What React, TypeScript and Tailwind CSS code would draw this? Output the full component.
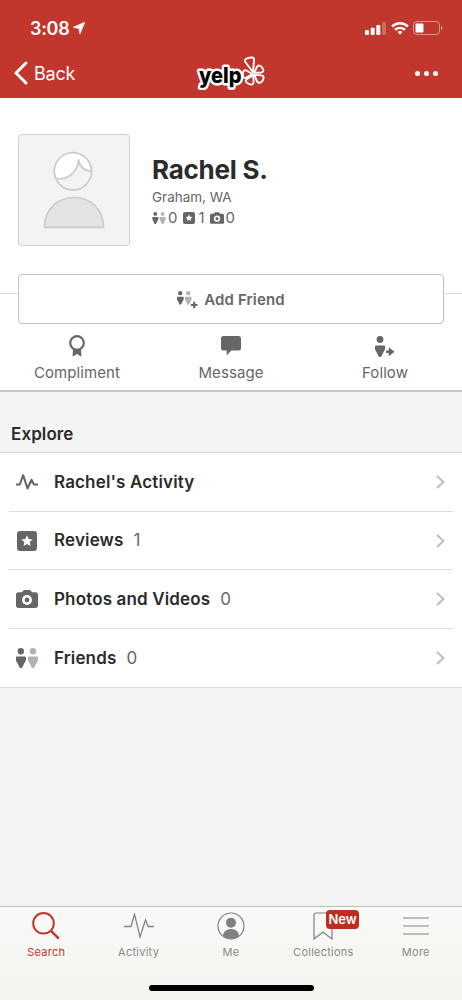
import React from "react";

type IconProps = { className?: string };

const personPath = "M1.200 8.500h7.400c1.200 0 1.800.9 1.600 2l-.4 2.200c-.2 1-.7 1.600-1.300 2.400L6.600 19c-.7 1.400-2.500 1.400-3.200 0l-1.900-3.900c-.6-.8-1.100-1.400-1.300-2.400l-.4-2.200c-.2-1.100.3-2 1.400-2Z";

const FriendsIcon = ({ className }: IconProps) => (
	<svg viewBox="0 0 22 20" className={className}>
		<circle cx="4.800" cy="3.200" r="3.200" fill="#666" />
		<path d={personPath} transform="translate(-.1 0)" fill="#666" />
		<circle cx="17" cy="3.200" r="3.200" fill="#b2b2b2" />
		<path d={personPath} transform="translate(12 0)" fill="#b2b2b2" />
	</svg>
);

const ReviewIcon = ({ className }: IconProps) => (
	<svg viewBox="0 0 20 20" className={className}>
		<rect width="20" height="20" rx="3.200" fill="#666" />
		<path
			d="m10 4.200 1.700 3.700 4 .5-3 2.700.8 4-3.500-2-3.500 2 .8-4-3-2.700 4-.5Z"
			fill="#fff"
		/>
	</svg>
);

const CameraIcon = ({ className }: IconProps) => (
	<svg viewBox="0 0 22 18" className={className}>
		<path
			d="M2.500 2.300h3.300L7.600.4c.2-.3.500-.4.900-.4h5c.4 0 .7.100.9.400l1.800 1.900h3.300c1.500 0 2.500 1 2.500 2.400v10.800c0 1.500-1 2.500-2.500 2.500h-17C1 18 0 17 0 15.500V4.700c0-1.400 1-2.400 2.500-2.400Z"
			fill="#666"
		/>
		<circle cx="11" cy="10" r="3.700" fill="#666" stroke="#fff" strokeWidth="2.600" />
	</svg>
);

const PulseIcon = ({ className }: IconProps) => (
	<svg viewBox="0 0 22 16" className={className} fill="none" stroke="#666" strokeWidth="2.100" strokeLinejoin="round">
		<path d="M0 10.500h3.800L7.200 1.200l4.300 13.300 4-8.700 2.500 4.700h4" />
	</svg>
);

const AddFriendIcon = () => (
	<svg width="21" height="18" viewBox="0 0 21 18">
		<g transform="scale(.66 .68)">
			<circle cx="4.900" cy="3.200" r="3.200" fill="#666" />
			<path d={personPath} fill="#666" />
			<circle cx="17" cy="3.200" r="3.200" fill="#b2b2b2" />
			<path d={personPath} transform="translate(12 0)" fill="#b2b2b2" />
		</g>
		<path d="M17.200 10.300v7.400M13.500 14h7" stroke="#fff" strokeWidth="3.600" />
		<path d="M17.200 10.700v6.600M13.900 14h6.600" stroke="#666" strokeWidth="2.100" />
	</svg>
);

const RibbonIcon = () => (
	<svg width="16" height="22" viewBox="0 0 16 22">
		<path d="M4 12.500 3.600 21.700 8 18.900l4.400 2.800-.4-9.200Z" fill="#666" />
		<circle cx="8" cy="8" r="6.800" fill="#fff" stroke="#666" strokeWidth="2.200" />
	</svg>
);

const MessageIcon = () => (
	<svg width="20" height="20" viewBox="0 0 20 20">
		<path d="M2.500 0h15A2.500 2.500 0 0 1 20 2.500v9.500a2.500 2.500 0 0 1-2.500 2.500h-7.200L5.700 19.500v-5H2.500A2.500 2.500 0 0 1 0 12V2.500A2.500 2.500 0 0 1 2.500 0Z" fill="#666" />
	</svg>
);

const FollowIcon = () => (
	<svg width="20" height="21" viewBox="0 0 20 21" fill="#666">
		<circle cx="5" cy="3.500" r="3.400" />
		<path d={personPath} transform="translate(0 1)" />
		<path d="M11 14.600h2.800v-3.400l5.700 4.600-5.700 4.400V17H11Z" />
	</svg>
);

const Avatar = () => (
	<div className="flex h-[112px] w-[112px] items-center justify-center rounded border border-[#cfcfcf] bg-[#f3f3f3]">
		<svg width="62" height="80" viewBox="0 0 62 80" stroke="#cccccc" strokeWidth="1.700">
			<circle cx="30" cy="21.500" r="18.500" fill="#f3f3f3" />
			<path
				d="M12.600 28C22 31 35 24 35.400 9.500c1 6 5 11 12.900 12A18.500 18.500 0 1 0 12.600 28Z"
				fill="#fff"
			/>
			<path d="M1.500 77.300C1.500 60 14 47.500 31 47.500S60.500 60 60.500 77.300Z" fill="#e4e4e4" />
		</svg>
	</div>
);

const YelpLogo = () => (
	<svg width="72" height="34" viewBox="0 2 72 34">
		<text
			x="4"
			y="29"
			textLength="42.500"
			lengthAdjust="spacingAndGlyphs"
			className="font-['Inter',sans-serif] text-[22px] font-extrabold"
			fill="#000"
			stroke="#fff"
			strokeWidth="5"
			strokeLinejoin="round"
			paintOrder="stroke"
		>
			yelp
		</text>
		<g stroke="#fff" strokeWidth="1.900" strokeLinejoin="round" fill="#c1372d">
			<path d="M58 18.300 50.300 8c-1.200-2.300.4-3.200 2.500-3.900 2.200-.7 6.200-1.300 6.300 1.300Z" />
			<path d="M59.200 18.800 61.900 13c1.400-2.600 3.900-1.200 5.200.5 1.600 2.100 2.200 4.400-.8 5Z" />
			<path d="m59.300 20.600 7.300.8c2.900.6 2.300 3.200.9 5.300-1.500 2.200-3.800 3.100-5.500.7Z" />
			<path d="m58.300 21.300.3 7c-.1 3-2.700 2.600-4.900 1.600-2.400-1.100-3.900-2.800-2-4.700Z" />
			<path d="m57.300 20-6.400 3.900c-2.500.9-3.200-1.600-3.100-4 .1-2.700 1.100-4.400 3.700-3.400Z" />
		</g>
	</svg>
);

const StatusBar = () => (
	<div className="flex h-14 items-center justify-between pr-[19px] pl-[30px]">
		<div className="flex items-center gap-1">
			<span className="text-[18px] font-semibold tracking-[-0.3px]">3:08</span>
			<svg width="12" height="12" viewBox="0 0 12 12" fill="#fff">
				<path d="M12 0 6.900 12 5.900 6.400 0 5.400Z" stroke="#fff" strokeWidth=".6" />
			</svg>
		</div>
		<div className="flex items-center">
			<svg width="21" height="13" viewBox="0 0 21 13" fill="#fff">
				<rect y="8" width="4" height="5" rx="1" />
				<rect x="5.700" y="5.700" width="4" height="7.300" rx="1" />
				<rect x="11.300" y="3" width="4" height="10" rx="1" />
				<rect x="17" width="4" height="13" rx="1" opacity=".25" />
			</svg>
			<svg width="18" height="13" viewBox="0 0 18 13" fill="none" stroke="#fff" strokeWidth="2.300" className="ml-[5px]">
				<path d="M1 4.600C5.600.1 12.400.1 17 4.600" />
				<path d="M4 7.900c2.900-2.800 7.100-2.800 10 0" />
				<path d="M6.500 10c1.400-1.300 3.600-1.300 5 0L9 12.800Z" fill="#fff" stroke="none" />
			</svg>
			<svg width="30" height="14" viewBox="0 0 30 14" className="ml-1">
				<rect x=".5" y=".5" width="26" height="13" rx="3.500" fill="none" stroke="#fff" opacity=".45" />
				<rect x="2.500" y="2.500" width="8" height="9" rx="1" fill="#fff" />
				<path d="M28 4.800c2 .7 2 3.700 0 4.400Z" fill="#fff" opacity=".45" />
			</svg>
		</div>
	</div>
);

const Header = () => (
	<header className="h-[98px] bg-[#c1372d] text-white">
		<StatusBar />
		<div className="grid h-[34px] grid-cols-3 items-center pr-6 pl-[14px]">
			<div className="flex items-center gap-[6px]">
				<svg width="14" height="24" viewBox="0 0 14 24" fill="none" stroke="#fff" strokeWidth="3" strokeLinecap="round" strokeLinejoin="round">
					<path d="M12 2 2 12l10 10" />
				</svg>
				<span className="text-[18px] tracking-[-0.2px]">Back</span>
			</div>
			<div className="flex justify-center pl-[10px]">
				<YelpLogo />
			</div>
			<div className="flex justify-end gap-1">
				<span className="h-[5px] w-[5px] rounded-full bg-white" />
				<span className="h-[5px] w-[5px] rounded-full bg-white" />
				<span className="h-[5px] w-[5px] rounded-full bg-white" />
			</div>
		</div>
	</header>
);

const actions = [
	{ label: "Compliment", icon: <RibbonIcon /> },
	{ label: "Message", icon: <MessageIcon /> },
	{ label: "Follow", icon: <FollowIcon /> },
];

const Profile = () => (
	<section className="h-[294px] border-b-2 border-[#c8c8c8] bg-white pt-9 text-[#666]">
		<div className="flex gap-[22px] pl-[18px]">
			<Avatar />
			<div className="pt-5">
				<h1 className="text-[26px] leading-8 font-bold tracking-[-0.25px] text-[#2b2b2b]">Rachel S.</h1>
				<p className="mt-[3px] text-[13.500px] leading-4">Graham, WA</p>
				<div className="mt-[3px] flex h-5 items-center text-[15px]">
					<FriendsIcon className="mr-[2px] h-3 w-[14px]" />
					<span>0</span>
					<ReviewIcon className="mr-[3px] ml-[6px] h-3 w-3" />
					<span>1</span>
					<CameraIcon className="mr-[2px] ml-[5px] h-3 w-[14px]" />
					<span>0</span>
				</div>
			</div>
		</div>
		{/* Button straddles the divider */}
		<div className="mt-[28px] flex">
			<div className="mt-[19px] h-px w-[18px] bg-[#dcdcdc]" />
			<button className="flex h-[50px] flex-1 items-center justify-center gap-[6px] rounded border border-[#bfbfbf] bg-white pt-[2px] text-[15px] font-semibold tracking-[0.15px]">
				<AddFriendIcon />
				Add Friend
			</button>
			<div className="mt-[19px] h-px w-[18px] bg-[#dcdcdc]" />
		</div>
		<div className="mt-[10px] grid grid-cols-3">
			{actions.map((action) => (
				<div key={action.label} className="flex flex-col items-center">
					<div className="flex h-6 items-center">{action.icon}</div>
					<span className="mt-[5px] text-[15px] leading-5 tracking-[0.1px]">{action.label}</span>
				</div>
			))}
		</div>
	</section>
);

const exploreItems = [
	{ label: "Rachel's Activity", icon: <PulseIcon className="h-4 w-[22px]" /> },
	{ label: "Reviews", count: 1, icon: <ReviewIcon className="h-5 w-5" /> },
	{ label: "Photos and Videos", count: 0, icon: <CameraIcon className="h-[18px] w-[22px]" /> },
	{ label: "Friends", count: 0, icon: <FriendsIcon className="h-5 w-[22px]" /> },
];

const Explore = () => (
	<section>
		<h2 className="flex h-[61px] items-end border-b border-[#dcdcdc] pb-[5px] pl-[11px] text-[17px] font-semibold tracking-[0.1px] text-[#2b2b2b]">
			Explore
		</h2>
		<ul className="border-b border-[#d8d8d8] bg-white">
			{exploreItems.map((item, i) => (
				<li
					key={item.label}
					className={`mx-[9px] flex h-[58.500px] items-center pt-px pr-2 pl-[7px] text-[17px] ${i < 3 ? "border-b border-[#dcdcdc]" : ""}`}
				>
					<div className="flex w-[22px] justify-center">{item.icon}</div>
					<span className="ml-4 font-semibold tracking-[0.15px] text-[#2b2b2b]">{item.label}</span>
					{item.count !== undefined && <span className="ml-[10px] text-[#666]">{item.count}</span>}
					<svg width="9" height="14" viewBox="0 0 9 14" fill="none" stroke="#bbb" strokeWidth="1.800" className="ml-auto">
						<path d="m1 1 6.500 6L1 13" />
					</svg>
				</li>
			))}
		</ul>
	</section>
);

const tabs = [
	{
		label: "Search",
		icon: (
			<svg width="28" height="28" viewBox="0 0 28 28" fill="none" stroke="#c1372d" strokeWidth="2">
				<circle cx="11.500" cy="11.300" r="10.300" />
				<path d="m18.800 18.600 8 8" strokeWidth="2.400" />
			</svg>
		),
	},
	{
		label: "Activity",
		icon: (
			<svg width="30" height="26" viewBox="0 0 30 26" fill="none" stroke="#858585" strokeWidth="1.300">
				<path d="M0 13.500h7l3.500-12.300L16 24l5.500-17 2.700 6.500H30" />
			</svg>
		),
	},
	{
		label: "Me",
		icon: (
			<svg width="28" height="28" viewBox="0 0 28 28">
				<circle cx="14" cy="14" r="13" fill="none" stroke="#808080" strokeWidth="1.200" />
				<circle cx="14" cy="10.800" r="5" fill="#808080" />
				<path d="M6 24.200C6 14.700 22 14.700 22 24.200a13 13 0 0 1-16 0Z" fill="#808080" />
			</svg>
		),
	},
	{
		label: "Collections",
		badge: "New",
		icon: (
			<svg width="20" height="28" viewBox="0 0 20 28" fill="none" stroke="#808080" strokeWidth="1.200">
				<path d="M1 27V3a2 2 0 0 1 2-2h14a2 2 0 0 1 2 2v24l-9-7Z" />
			</svg>
		),
	},
	{
		label: "More",
		icon: (
			<svg width="26" height="18" viewBox="0 0 26 18" stroke="#808080" strokeWidth="1.200">
				<path d="M0 1h26M0 9h26M0 17h26" />
			</svg>
		),
	},
];

const TabBar = () => (
	<nav className="mt-auto flex h-[94px] flex-col border-t border-[#bcc0b0] bg-gradient-to-b from-[#f9f9f7] to-[#f3f3ef]">
		<div className="grid grid-cols-5 pt-1">
			{tabs.map((tab) => (
				<div
					key={tab.label}
					className={`flex flex-col items-center ${tab.label === "Search" ? "text-[#c1372d]" : "text-[#8a8a8a]"}`}
				>
					<div className="relative flex h-[30px] items-center">
						{tab.icon}
						{tab.badge && (
							<span className="absolute top-[-1px] left-[13px] rounded bg-[#bd2d20] px-[2px] text-[13px] leading-[19px] font-semibold text-white">
								{tab.badge}
							</span>
						)}
					</div>
					<span className="mt-[3px] text-[11px] leading-4 tracking-[0.25px]">{tab.label}</span>
				</div>
			))}
		</div>
		<div className="mx-auto mt-auto mb-[9px] h-[6px] w-[165px] rounded-full bg-black" />
	</nav>
);

export default function App() {
	return (
		<div className="flex h-[1000px] w-[462px] flex-col overflow-hidden bg-[#f4f4f4] font-['Inter',sans-serif]">
			<Header />
			<Profile />
			<Explore />
			<TabBar />
		</div>
	);
}
